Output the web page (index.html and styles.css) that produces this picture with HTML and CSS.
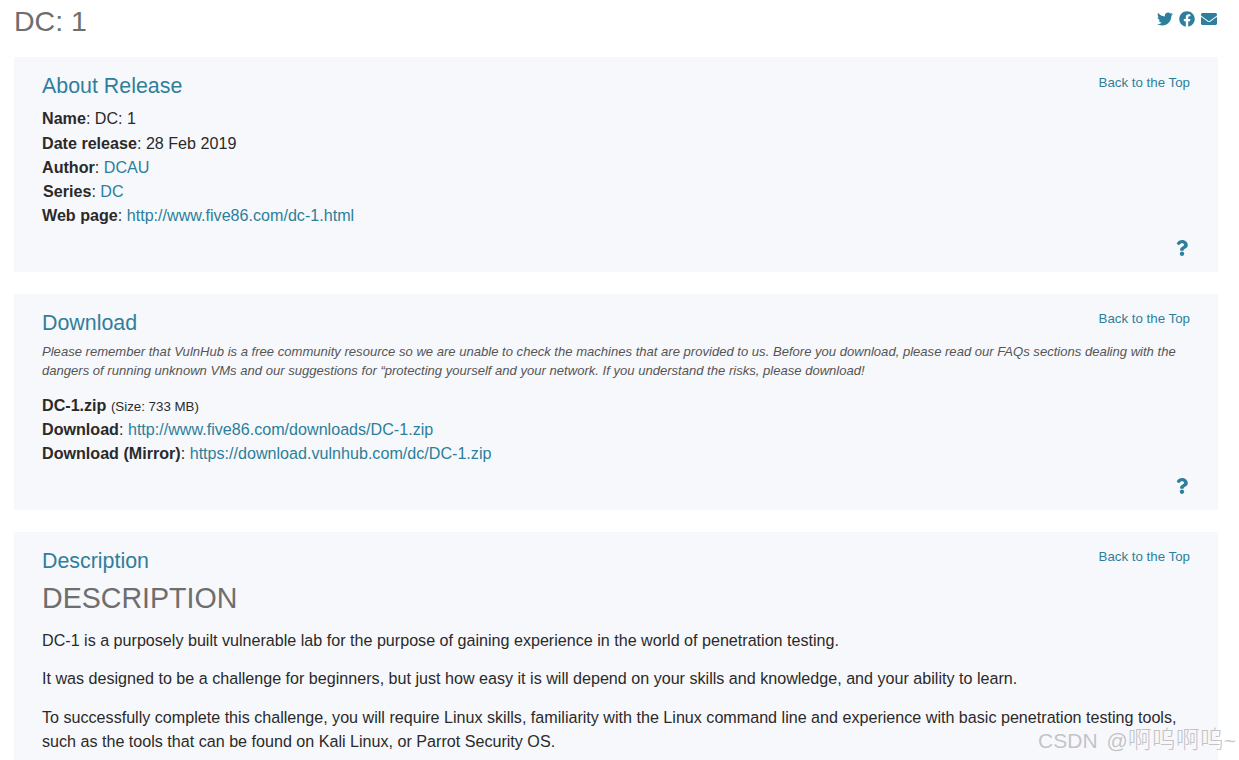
FILE: index.html
```html
<!DOCTYPE html>
<html lang="en">
<head>
<meta charset="utf-8">
<title>DC: 1</title>
<link rel="stylesheet" href="styles.css">
</head>
<body>
<header class="top">
  <h1 class="title">DC: 1</h1>
  <div class="share">
    <a href="#" class="share-icon" aria-label="Twitter"><svg viewBox="0 0 512 512" width="16" height="16"><path d="M459.4 151.7c.3 4.5.3 9.100.3 13.600 0 138.700-105.600 298.600-298.600 298.600-59.500 0-114.700-17.200-161.100-47.100 8.400 1 16.600 1.300 25.300 1.300 49.100 0 94.200-16.600 130.300-44.800-46.100-1-84.800-31.200-98.100-72.800 6.500 1 13 1.600 19.800 1.600 9.400 0 18.800-1.300 27.600-3.600-48.100-9.700-84.100-52-84.100-103v-1.300c14 7.800 30.200 12.700 47.400 13.300-28.300-18.800-46.800-51-46.800-87.400 0-19.500 5.200-37.400 14.300-53 51.700 63.700 129.300 105.300 216.400 109.800-1.600-7.800-2.600-15.900-2.600-24 0-57.800 46.800-104.900 104.900-104.900 30.200 0 57.500 12.700 76.700 33.100 23.700-4.500 46.500-13.300 66.600-25.300-7.800 24-24.400 44.200-46.100 57.200 21.100-2.300 41.600-8.100 60.400-16.200-14.300 20.800-32.200 39.300-52.600 54.300z"/></svg></a>
    <a href="#" class="share-icon" aria-label="Facebook"><svg viewBox="0 0 512 512" width="16" height="16"><path d="M504 256C504 119 393 8 256 8S8 119 8 256c0 123.800 90.700 226.400 209.300 245V327.700h-63V256h63v-54.600c0-62.200 37-96.500 93.700-96.500 27.100 0 55.500 4.800 55.500 4.800v61h-31.300c-30.800 0-40.400 19.100-40.400 38.700V256h68.800l-11 71.700h-57.800V501C413.300 482.400 504 379.800 504 256z"/></svg></a>
    <a href="#" class="share-icon" aria-label="Email"><svg viewBox="0 0 512 512" width="16" height="16"><path d="M502.300 190.800c3.900-3.100 9.700-.2 9.700 4.700V400c0 26.500-21.500 48-48 48H48c-26.500 0-48-21.500-48-48V195.600c0-5 5.700-7.800 9.700-4.700 22.400 17.400 52.100 39.500 154.100 113.600 21.100 15.400 56.700 47.800 92.200 47.600 35.700.3 72-32.800 92.300-47.600 102-74.100 131.600-96.300 154-113.700zM256 320c23.200.4 56.600-29.200 73.400-41.400 132.700-96.300 142.800-104.700 173.400-128.700 5.800-4.500 9.200-11.500 9.200-18.900v-19c0-26.500-21.500-48-48-48H48C21.500 64 0 85.500 0 112v19c0 7.400 3.400 14.300 9.200 18.900 30.600 23.900 40.700 32.400 173.400 128.700 16.800 12.200 50.200 41.800 73.400 41.400z"/></svg></a>
  </div>
</header>

<section class="panel panel-short">
  <a href="#" class="back back-first">Back to the Top</a>
  <h2 class="panel-title">About Release</h2>
  <ul class="facts">
    <li><b>Name</b>: DC: 1</li>
    <li class="gap"><b>Date release</b>: 28 Feb 2019</li>
    <li><b>Author</b>: <a href="#">DCAU</a></li>
    <li class="nudge"><b>Series</b>: <a href="#">DC</a></li>
    <li><b>Web page</b>: <a href="#">http://www.five86.com/dc-1.html</a></li>
  </ul>
  <div class="help"><a href="#" aria-label="Help"><svg viewBox="0 0 384 512" width="12" height="16"><path d="M202 0C122 0 70 33 29 92c-7 11-5 25 5 33l43 33c10 8 25 6 33-4 25-31 44-49 83-49 31 0 69 20 69 50 0 22-19 34-49 51-36 20-83 45-83 107v10c0 13 11 24 24 24h73c13 0 24-11 24-24v-6c0-43 126-45 126-161C377 69 287 0 202 0zm-10 370c-38 0-70 32-70 71s32 71 70 71 70-32 70-71-32-71-70-71z"/></svg></a></div>
</section>

<section class="panel panel-short">
  <a href="#" class="back">Back to the Top</a>
  <h2 class="panel-title">Download</h2>
  <p class="note">Please remember that VulnHub is a free community resource so we are unable to check the machines that are provided to us. Before you download, please read our FAQs sections dealing with the dangers of running unknown VMs and our suggestions for “protecting yourself and your network. If you understand the risks, please download!</p>
  <ul class="facts">
    <li><b>DC-1.zip</b> <small class="size">(Size: 733 MB)</small></li>
    <li><b>Download</b>: <a href="#">http://www.five86.com/downloads/DC-1.zip</a></li>
    <li><b>Download (Mirror)</b>: <a href="#">https://download.vulnhub.com/dc/DC-1.zip</a></li>
  </ul>
  <div class="help"><a href="#" aria-label="Help"><svg viewBox="0 0 384 512" width="12" height="16"><path d="M202 0C122 0 70 33 29 92c-7 11-5 25 5 33l43 33c10 8 25 6 33-4 25-31 44-49 83-49 31 0 69 20 69 50 0 22-19 34-49 51-36 20-83 45-83 107v10c0 13 11 24 24 24h73c13 0 24-11 24-24v-6c0-43 126-45 126-161C377 69 287 0 202 0zm-10 370c-38 0-70 32-70 71s32 71 70 71 70-32 70-71-32-71-70-71z"/></svg></a></div>
</section>

<section class="panel panel-last">
  <a href="#" class="back">Back to the Top</a>
  <h2 class="panel-title">Description</h2>
  <h3 class="desc-title">DESCRIPTION</h3>
  <p class="para">DC-1 is a purposely built vulnerable lab for the purpose of gaining experience in the world of penetration testing.</p>
  <p class="para">It was designed to be a challenge for beginners, but just how easy it is will depend on your skills and knowledge, and your ability to learn.</p>
  <p class="para"><span class="para-line">To successfully complete this challenge, you will require Linux skills, familiarity with the Linux command line and experience with basic penetration testing tools,</span> <span class="para-line">such as the tools that can be found on Kali Linux, or Parrot Security OS.</span></p>
</section>

<div class="watermark">CSDN @<span class="wm-cjk">啊呜啊呜</span>~</div>
</body>
</html>
```
FILE: styles.css
```css
html, body {
  height: 760px;
  overflow: hidden;
}
body {
  margin: 0;
  padding: 0 21px 0 14px;
  background: #fff;
  color: #2a2a2a;
  font: 16.13px/24px "Liberation Sans", Arial, sans-serif;
  position: relative;
}
a {
  color: #2b7f9b;
  text-decoration: none;
}
.top {
  display: flex;
  justify-content: space-between;
  align-items: flex-start;
  height: 57px;
}
.title {
  margin: 3px 0 0;
  font-size: 28.5px;
  line-height: 36px;
  font-weight: 400;
  color: #6e6e6e;
}
.share {
  display: flex;
  gap: 6px;
  padding-top: 11px;
  margin-right: 1px;
}
.share-icon {
  display: block;
  height: 16px;
}
.share-icon svg, .help svg {
  display: block;
  fill: #2f7f9c;
}
.panel {
  position: relative;
  background: #f7f8fc;
  padding: 16px 28px 0;
  margin-bottom: 22px;
}
.panel-short {
  height: 215px;
  box-sizing: border-box;
}
.panel + .panel-short {
  height: 216px;
}
.panel-last {
  margin-bottom: 0;
  padding-bottom: 7px;
}
.back {
  position: absolute;
  top: 13px;
  right: 28px;
  font-size: 13.3px;
  line-height: 24px;
}
.back-first {
  top: 14px;
}
.panel-title {
  margin: 0;
  font-size: 21.4px;
  line-height: 26px;
  font-weight: 400;
  color: #2f7f9c;
}
.facts {
  list-style: none;
  margin: 7px 0 0;
  padding: 0;
}
.facts b {
  font-weight: 700;
}
.gap {
  margin-top: 1px;
}
.nudge {
  padding-left: 1px;
}
.size {
  font-size: 13.3px;
  line-height: 1;
}
.note {
  margin: 6px 0 0;
  font-size: 13.07px;
  line-height: 19px;
  font-style: italic;
  color: #555;
}
.note + .facts {
  margin-top: 13px;
}
.help {
  position: absolute;
  right: 30px;
  bottom: 16px;
}
.desc-title {
  margin: 6px 0 0;
  font-size: 28.6px;
  line-height: 36px;
  font-weight: 400;
  color: #6e6e6e;
}
.para {
  margin: 12px 0 0;
}
.para + .para {
  margin-top: 14px;
}
.para + .para + .para {
  margin-top: 15px;
}
.para-line {
  display: block;
  width: max-content;
}
.watermark {
  position: absolute;
  right: 3px;
  bottom: 5px;
  font-size: 21px;
  line-height: 28px;
  word-spacing: 3px;
  color: rgba(150, 150, 150, 0.55);
  font-family: "Liberation Sans", "Noto Sans CJK SC", sans-serif;
  white-space: nowrap;
}
.wm-cjk {
  font-size: 24px;
  font-weight: 300;
}
```
